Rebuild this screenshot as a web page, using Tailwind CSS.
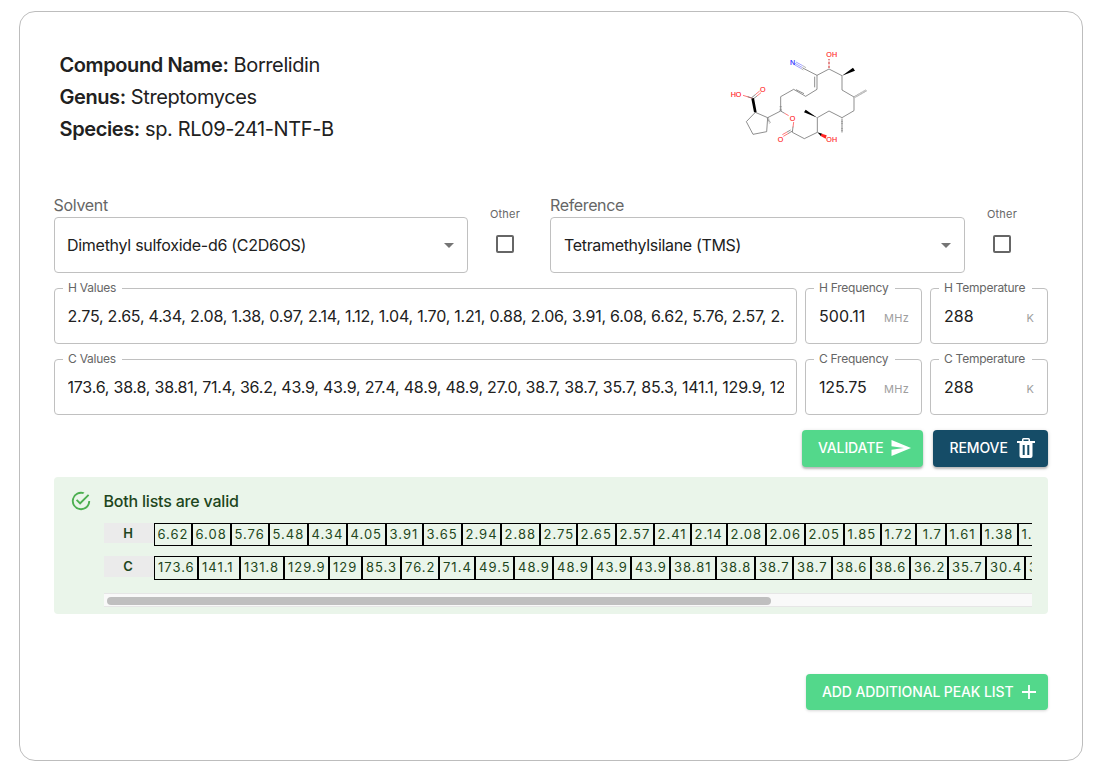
<!DOCTYPE html>
<html lang="en">
<head>
<meta charset="utf-8">
<title>Peak lists</title>
<script src="https://cdn.jsdelivr.net/npm/@tailwindcss/browser@4"></script>
</head>
<body class="bg-white font-['Inter','Liberation_Sans',sans-serif] text-[#212121]">
<main class="mt-[11px] ml-[19px] flex h-[750px] w-[1064px] flex-col rounded-[16px] border border-[#bdbdbd] px-[34px] overflow-hidden">

  <!-- Compound details and structure -->
  <header class="flex h-[173px] pt-[28px]">
    <div class="w-[666px] pt-[9px] pl-[5.5px] text-[20px] leading-8 tracking-[-0.4px]">
      <p><b class="font-semibold tracking-[-0.4px]">Compound Name:</b> Borrelidin</p>
      <p><b class="font-semibold tracking-[-0.42px]">Genus:</b> Streptomyces</p>
      <p><b class="font-semibold tracking-[-0.38px]">Species:</b> sp. RL09-241-NTF-B</p>
    </div>
    <svg class="h-[110px] w-[160px]" viewBox="0 0 480 330" fill="none" stroke="#666" stroke-width="2.2">
      <path d="M250 85L291 106L327 87L366 107V150L402 171V212L366 233L327 213L292 233V277L253 296L217 277M291 106V148L257 169L221 148L182 170V213L143 233L106 217L79 245L99 283L140 275L143 233M106 217L98 175M284 110V142M252 161L228 149"/>
      <path stroke="#f44" d="M221 246L219 262M98 175L69 166"/>
      <path d="M182 213L194 220M219 260L217 277M98 175L83 170"/>
      <path stroke="#f44" d="M194 220L206 227M190 289L204 281M187 284L201 276M111 168L123 158M107 163L119 153"/>
      <path d="M204 281L217 273M201 276L212 270M98 178L111 168M95 173L107 163"/>
      <path stroke="#55f" stroke-width="1.6" d="M225 70L246 82M228 66L248 77M223 74L244 86"/>
      <path stroke="#777" stroke-width="1.6" d="M246 82L252 86M248 77L258 83M244 86L250 90"/>
      <path fill="#000" stroke="none" d="M366 107L399 83L405 92ZM292 233L252 217L257 209ZM110 217H102L94 176L102 174Z"/>
      <path fill="#000" stroke="none" d="M292 277L307 281L303 289Z"/>
      <path fill="#f22" stroke="none" d="M305 281L320 286L317 296L302 288Z"/>
      <path stroke="#888" stroke-width="6" stroke-dasharray="2 1.5" d="M404 171L439 151M366 236V277"/>
      <path stroke="#d66" stroke-width="6" stroke-dasharray="2 2" d="M327 84V57"/>
      <path stroke="#888" stroke-width="6" stroke-dasharray="2 2" d="M182 213V197M143 233L150 250"/>
      <g stroke="#f22" stroke-width="0.4" fill="#f22" font-family="Liberation Sans" font-size="21.5">
        <text x="319" y="52">OH</text><text x="32" y="170">HO</text><text x="120" y="155">O</text>
        <text x="209" y="243">O</text><text x="173" y="306">O</text><text x="319" y="306">OH</text>
        <text x="210" y="74" fill="#22f" stroke="#22f">N</text>
      </g>
    </svg>
  </header>

  <!-- Solvent and reference -->
  <section class="flex h-[88px] pt-[9px] text-[16px] tracking-[-0.28px]">
    <div class="w-[414px]">
      <div class="h-[23px] leading-[23px] text-[#666] -ml-[0.5px] tracking-[-0.3px]">Solvent</div>
      <div class="flex h-[56px] items-center justify-between rounded-[4px] border border-[#c0c0c0] pl-[12px] pr-[13px]">
        <span>Dimethyl sulfoxide-d6 (C2D6OS)</span>
        <svg class="h-[5px] w-[10px]" viewBox="0 0 10 5"><path d="M0 0H10L5 5Z" fill="#757575"/></svg>
      </div>
    </div>
    <div class="flex w-[82px] flex-col items-center pt-[12px] pr-[8px]">
      <span class="text-[11px] leading-[16px] tracking-[0.2px] text-[#666]">Other</span>
      <span class="mt-[13px] h-[18px] w-[18px] rounded-[2px] border-2 border-[#666]"></span>
    </div>
    <div class="w-[415px]">
      <div class="h-[23px] leading-[23px] text-[#666] tracking-[-0.36px]">Reference</div>
      <div class="flex h-[56px] items-center justify-between rounded-[4px] border border-[#c0c0c0] pl-[13px] pr-[13px]">
        <span class="tracking-[-0.33px]">Tetramethylsilane (TMS)</span>
        <svg class="h-[5px] w-[10px]" viewBox="0 0 10 5"><path d="M0 0H10L5 5Z" fill="#757575"/></svg>
      </div>
    </div>
    <div class="flex w-[82px] flex-col items-center pt-[12px] pr-[8px]">
      <span class="text-[11px] leading-[16px] tracking-[0.2px] text-[#666]">Other</span>
      <span class="mt-[13px] h-[18px] w-[18px] rounded-[2px] border-2 border-[#666]"></span>
    </div>
  </section>

  <!-- Peak values -->
  <section class="mt-[15px] grid grid-cols-[743px_117px_118px] gap-x-[8px] gap-y-[15px] text-[16px] leading-[24px]">
    <div class="relative flex h-[56px] items-center rounded-[4px] border border-[#c0c0c0] pl-[12.5px]">
      <span class="absolute -top-[8px] left-[8px] bg-white pr-[6px] pl-[5px] text-[12px] leading-[14px] tracking-[-0.24px] text-[#666]">H Values</span>
      <span class="w-[716px] overflow-hidden whitespace-nowrap tracking-[-0.221px]">2.75, 2.65, 4.34, 2.08, 1.38, 0.97, 2.14, 1.12, 1.04, 1.70, 1.21, 0.88, 2.06, 3.91, 6.08, 6.62, 5.76, 2.57, 2.</span>
    </div>
    <div class="relative flex h-[56px] items-center justify-between rounded-[4px] border border-[#c0c0c0] px-[13px]">
      <span class="absolute -top-[8px] left-[8px] bg-white pr-[7px] pl-[5px] text-[12px] leading-[14px] tracking-[-0.26px] text-[#666]">H Frequency</span>
      <span class="tracking-[0.1px]">500.11</span><span class="mt-[3px] -mr-[1px] text-[11px] tracking-[0.27px] text-[#9e9e9e]">MHz</span>
    </div>
    <div class="relative flex h-[56px] items-center justify-between rounded-[4px] border border-[#c0c0c0] px-[13px]">
      <span class="absolute -top-[8px] left-[8px] bg-white pr-[7px] pl-[5px] text-[12px] leading-[14px] tracking-[-0.26px] text-[#666]">H Temperature</span>
      <span>288</span><span class="mt-[3px] text-[11px] text-[#9e9e9e]">K</span>
    </div>
    <div class="relative flex h-[56px] items-center rounded-[4px] border border-[#c0c0c0] pl-[12.5px]">
      <span class="absolute -top-[8px] left-[8px] bg-white pr-[6px] pl-[5px] text-[12px] leading-[14px] tracking-[-0.24px] text-[#666]">C Values</span>
      <span class="w-[716px] overflow-hidden whitespace-nowrap tracking-[-0.219px]">173.6, 38.8, 38.81, 71.4, 36.2, 43.9, 43.9, 27.4, 48.9, 48.9, 27.0, 38.7, 38.7, 35.7, 85.3, 141.1, 129.9, 12</span>
    </div>
    <div class="relative flex h-[56px] items-center justify-between rounded-[4px] border border-[#c0c0c0] px-[13px]">
      <span class="absolute -top-[8px] left-[8px] bg-white pr-[7px] pl-[5px] text-[12px] leading-[14px] tracking-[-0.26px] text-[#666]">C Frequency</span>
      <span class="tracking-[-0.15px]">125.75</span><span class="mt-[3px] -mr-[1px] text-[11px] tracking-[0.27px] text-[#9e9e9e]">MHz</span>
    </div>
    <div class="relative flex h-[56px] items-center justify-between rounded-[4px] border border-[#c0c0c0] px-[13px]">
      <span class="absolute -top-[8px] left-[8px] bg-white pr-[7px] pl-[5px] text-[12px] leading-[14px] tracking-[-0.26px] text-[#666]">C Temperature</span>
      <span>288</span><span class="mt-[3px] text-[11px] text-[#9e9e9e]">K</span>
    </div>
  </section>

  <!-- List actions -->
  <div class="mt-[15px] flex justify-end gap-[10px] text-[14px] font-medium text-white">
    <button class="flex h-[37px] w-[121px] items-center rounded-[4px] bg-[#53d88b] pb-[2px] pl-[16px] tracking-[-0.12px] shadow-[0_2px_2px_rgba(0,0,0,.2),0_1px_4px_rgba(0,0,0,.14)]">VALIDATE
      <svg class="ml-[7.5px] h-[18px] w-[20px]" viewBox="0 0 20 18"><path fill="#fff" d="M0.5 1L20 9L0.5 17V10.7L13 9L0.5 7.3Z"/></svg>
    </button>
    <button class="flex h-[37px] w-[115px] items-center rounded-[4px] bg-[#154c67] pb-[2px] pl-[16.5px] tracking-[-0.1px] shadow-[0_2px_2px_rgba(0,0,0,.2),0_1px_4px_rgba(0,0,0,.14)]">REMOVE
      <svg class="ml-[9px] h-[20px] w-[18px] shrink-0" viewBox="0 0 18 20"><path fill="#fff" fill-rule="evenodd" d="M5 3V1.5Q5 0 6.5 0H11.5Q13 0 13 1.5V3H18V5H15.5V18Q15.5 20 13.5 20H4.5Q2.5 20 2.5 18V5H0V3ZM6.5 3H11.5V1.5H6.5ZM5.7 7V17H7.7V7ZM10.3 7V17H12.3V7Z"/></svg>
    </button>
  </div>

  <!-- Validation result -->
  <section class="mt-[10px] h-[137px] rounded-[4px] bg-[#eaf5ea] pt-[14px] pr-[16px] pl-[16px] text-[#1e4620]">
    <div class="flex h-[20px] items-center">
      <svg class="h-[22px] w-[22px]" viewBox="0 0 24 24" fill="#4caf50"><path d="M20 12A8 8 0 1 1 12 4C12.76 4 13.5 4.11 14.2 4.31L15.77 2.74A9.99 9.99 0 1 0 22 12M7.91 10.08L6.5 11.5L11 16L21 6L19.59 4.58L11 13.17L7.91 10.08Z"/></svg>
      <span class="ml-[11.5px] text-[16px] font-medium tracking-[-0.2px]">Both lists are valid</span>
    </div>
    <div class="ml-[34px] w-[928px] overflow-hidden pt-[12px] text-[13px] leading-[21px] tracking-[1px]">
      <div class="flex h-[33px]">
        <div class="h-[20px] w-[50px] shrink-0 bg-[#ebebeb] text-center font-semibold leading-[20px] tracking-normal pr-[2px]">H</div>
        <div class="flex h-[23px] shrink-0 [&>span]:shrink-0 [&>span]:border [&>span]:border-black [&>span]:pl-[2.5px] [&>span]:whitespace-nowrap">
          <span class="w-[38px]">6.62</span><span class="w-[39px]">6.08</span><span class="w-[38px]">5.76</span><span class="w-[39px]">5.48</span><span class="w-[39px]">4.34</span><span class="w-[39px]">4.05</span><span class="w-[37px]">3.91</span><span class="w-[39px]">3.65</span><span class="w-[39px]">2.94</span><span class="w-[39px]">2.88</span><span class="w-[37px]">2.75</span><span class="w-[39px]">2.65</span><span class="w-[38px]">2.57</span><span class="w-[37px]">2.41</span><span class="w-[36px]">2.14</span><span class="w-[39px]">2.08</span><span class="w-[39px]">2.06</span><span class="w-[39px]">2.05</span><span class="w-[37px]">1.85</span><span class="w-[35px]">1.72</span><span class="w-[30px] text-center">1.7</span><span class="w-[35px]">1.61</span><span class="w-[37px]">1.38</span><span class="w-[37px]">1.21</span>
        </div>
      </div>
      <div class="flex h-[37px]">
        <div class="h-[21px] w-[50px] shrink-0 bg-[#ebebeb] text-center font-semibold leading-[20px] tracking-normal pr-[2px]">C</div>
        <div class="flex h-[24px] shrink-0 [&>span]:shrink-0 [&>span]:border [&>span]:border-black [&>span]:pl-[3px] [&>span]:whitespace-nowrap">
          <span class="w-[44px]">173.6</span><span class="w-[42px]">141.1</span><span class="w-[44px]">131.8</span><span class="w-[45px]">129.9</span><span class="w-[33px]">129</span><span class="w-[39px]">85.3</span><span class="w-[38px]">76.2</span><span class="w-[36px]">71.4</span><span class="w-[39px]">49.5</span><span class="w-[39px]">48.9</span><span class="w-[39px]">48.9</span><span class="w-[39px]">43.9</span><span class="w-[39px]">43.9</span><span class="w-[46px]">38.81</span><span class="w-[39px]">38.8</span><span class="w-[38px]">38.7</span><span class="w-[39px]">38.7</span><span class="w-[39px]">38.6</span><span class="w-[39px]">38.6</span><span class="w-[38px]">36.2</span><span class="w-[38px]">35.7</span><span class="w-[39px]">30.4</span><span class="w-[39px]">35.7</span>
        </div>
      </div>
      <div class="h-[14px] border-y border-[#e6e6e6] bg-[#f9f9f9] pt-[3px] pl-[3px]">
        <div class="h-[8px] w-[664px] rounded-full bg-[#bfbfbf]"></div>
      </div>
    </div>
  </section>

  <div class="mt-[60px] flex justify-end">
    <button class="flex h-[36px] w-[242px] items-center rounded-[4px] bg-[#53d88b] pl-[16px] text-[14px] font-medium tracking-[-0.12px] whitespace-nowrap text-white shadow-[0_1px_3px_rgba(0,0,0,.16)]"><span class="pb-[2px]">ADD ADDITIONAL PEAK LIST</span>
      <svg class="ml-[9px] h-[14px] w-[14px] shrink-0" viewBox="0 0 14 14" stroke="#fff" stroke-width="1.8"><path d="M7 0V14M0 7H14"/></svg>
    </button>
  </div>
</main>
</body>
</html>
